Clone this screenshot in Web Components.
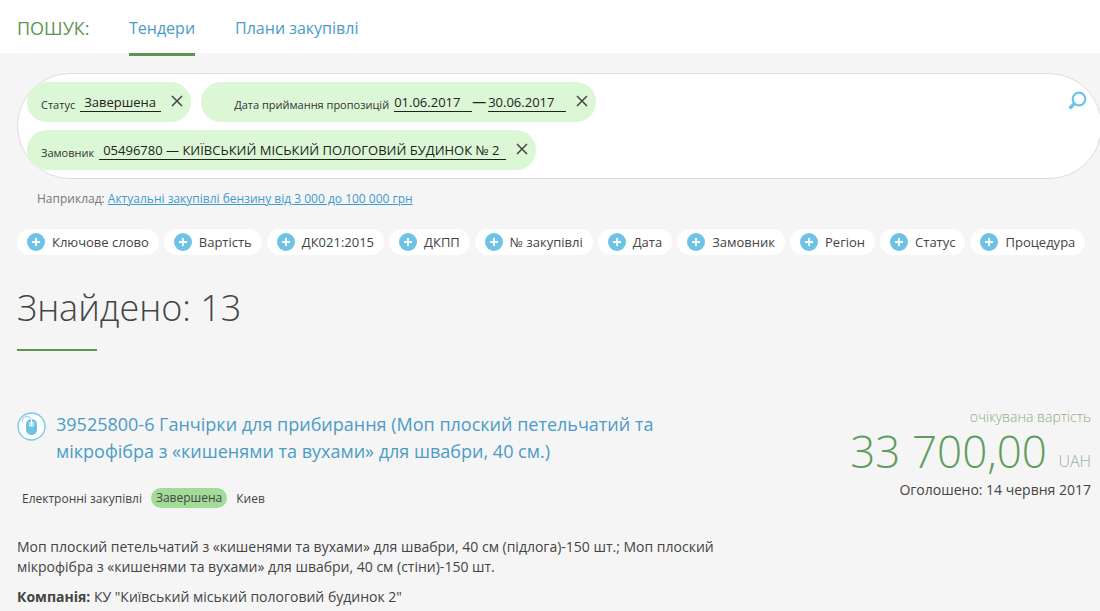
<!DOCTYPE html>
<html lang="uk">
<head>
<meta charset="utf-8">
<title>Пошук</title>
<style>
  html, body { margin: 0; height: 611px; overflow: hidden; background: #f5f5f5; }
  body { font-family: "Open Sans", "Liberation Sans", sans-serif; color: #444; }
</style>
</head>
<body>
<search-tabs></search-tabs>
<search-box></search-box>
<filter-bar></filter-bar>
<found-title count="13"></found-title>
<tender-item></tender-item>

<script>
class SearchTabs extends HTMLElement {
  constructor() {
    super();
    this.attachShadow({ mode: 'open' });
    this.shadowRoot.innerHTML = `
      <style>
        :host { display: flex; height: 53px; background: #fff; padding-left: 17px; font-size: 16px; }
        .label { color: #5f9453; margin-top: 16px; width: 112px; line-height: 24px; font-size: 18px; }
        a { color: #4a9cc7; text-decoration: none; margin-right: 40px; height: 56px; box-sizing: border-box; padding-top: 16px; line-height: 24px; }
        a.on { border-bottom: 3px solid #5f9453; }
      </style>
      <div class="label">ПОШУК:</div>
      <a class="on">Тендери</a>
      <a>Плани закупівлі</a>`;
  }
}

class FilterChip extends HTMLElement {
  constructor() {
    super();
    this.attachShadow({ mode: 'open' });
    this.shadowRoot.innerHTML = `
      <style>
        :host { display: inline-flex; align-items: center; height: 40px; background: #dcf7d5; border-radius: 20px; padding: 0 8px 0 14px; color: #222; font-size: 13px; }
        ::slotted([slot=name]) { font-size: 11px; margin-top: 5px; margin-right: 5px; color: #333; }
        svg { margin-left: 10px; margin-bottom: 3px; }
      </style>
      <slot name="name"></slot>
      <slot></slot>
      <svg width="12" height="12" viewBox="0 0 12 12"><path d="M1 1l10 10M11 1L1 11" stroke="#444" stroke-width="1.5"/></svg>`;
  }
}

class ChipValue extends HTMLElement {
  constructor() {
    super();
    this.attachShadow({ mode: 'open' });
    this.shadowRoot.innerHTML = `
      <style>
        :host { display: inline-block; box-sizing: border-box; border-bottom: 1px solid #222; line-height: 20px; height: 20px; padding: 0 5px; white-space: nowrap; margin-top: -1px; }
      </style>
      <slot></slot>`;
  }
}

class SearchBox extends HTMLElement {
  constructor() {
    super();
    this.attachShadow({ mode: 'open' });
    this.shadowRoot.innerHTML = `
      <style>
        :host { display: block; position: relative; box-sizing: border-box; height: 106px; margin: 20px 0 0 17px; background: #fff; border: 1px solid #ddd; border-radius: 53px; padding: 8px 9px; width: 1085px; }
        .row { display: flex; gap: 10px; height: 48px; }
        svg { position: absolute; left: 1049px; top: 17px; }
        .hint { position: absolute; left: 19px; top: 116px; font-size: 12px; color: #777; white-space: nowrap; }
        .hint a { color: #3f9bcf; text-decoration: underline; }
      </style>
      <div class="row">
        <filter-chip><span slot="name">Статус</span><chip-value style="width:81px;padding-left:4px">Завершена</chip-value></filter-chip>
        <filter-chip style="padding-left:33px"><span slot="name">Дата приймання пропозицій</span><chip-value style="width:78px;padding-left:0">01.06.2017</chip-value><span style="font-size:14px;width:16px;margin-top:-2px">—</span><chip-value style="width:78px;padding-left:0">30.06.2017</chip-value></filter-chip>
      </div>
      <div class="row">
        <filter-chip><span slot="name">Замовник</span><chip-value style="width:407px;padding-left:4px">05496780 — КИЇВСЬКИЙ МІСЬКИЙ ПОЛОГОВИЙ БУДИНОК № 2</chip-value></filter-chip>
      </div>
      <svg width="20" height="20" viewBox="0 0 20 20"><circle cx="12" cy="8" r="6.3" fill="none" stroke="#6cc3e6" stroke-width="2.2"/><path d="M7.5 12.5L2.5 17.5" stroke="#6cc3e6" stroke-width="3.2"/></svg>
      <div class="hint">Наприклад: <a>Актуальні закупівлі бензину від 3 000 до 100 000 грн</a></div>`;
  }
}

class AddFilter extends HTMLElement {
  constructor() {
    super();
    this.attachShadow({ mode: 'open' });
    this.shadowRoot.innerHTML = `
      <style>
        :host { display: inline-flex; align-items: center; height: 26px; background: #fff; border-radius: 13px; padding: 0 10px; font-size: 13px; color: #444; white-space: nowrap; gap: 7px; }
        .plus { flex: none; }
      </style>
      <svg class="plus" width="18" height="18" viewBox="0 0 18 18"><circle cx="9" cy="9" r="9" fill="#6cc3e6"/><path d="M9 5v8M5 9h8" stroke="#fff" stroke-width="2"/></svg>
      <slot></slot>`;
  }
}

class FilterBar extends HTMLElement {
  constructor() {
    super();
    this.attachShadow({ mode: 'open' });
    const names = ['Ключове слово', 'Вартість', 'ДК021:2015', 'ДКПП', '№ закупівлі', 'Дата', 'Замовник', 'Регіон', 'Статус', 'Процедура'];
    this.shadowRoot.innerHTML = `
      <style>
        :host { display: flex; gap: 5px; margin: 50px 0 0 17px; }
      </style>
      ${names.map(n => `<add-filter>${n}</add-filter>`).join('')}`;
  }
}

class FoundTitle extends HTMLElement {
  constructor() {
    super();
    this.attachShadow({ mode: 'open' });
    this.shadowRoot.innerHTML = `
      <style>
        :host { display: block; margin: 0 0 0 17px; }
        h1 { margin: 30px 0 0; font-size: 36px; font-weight: 300; line-height: 46px; color: #444; }
        hr { width: 80px; height: 2px; margin: 18px 0 0; border: 0; background: #5f9453; }
      </style>
      <h1>Знайдено: ${this.getAttribute('count')}</h1>
      <hr>`;
  }
}

class TenderItem extends HTMLElement {
  constructor() {
    super();
    this.attachShadow({ mode: 'open' });
    this.shadowRoot.innerHTML = `
      <style>
        :host { display: block; position: relative; margin: 0 9px 0 17px; padding-top: 60px; }
        .top { display: flex; justify-content: space-between; }
        .title { display: flex; gap: 10px; width: 680px; }
        .title svg { flex: none; margin-top: 1px; }
        h2 { margin: 0; font-size: 18px; font-weight: 400; line-height: 27px; color: #4a9cc7; }
        .price { position: absolute; right: 0; top: 56px; text-align: right; }
        .exp { font-size: 14px; color: #8aaf80; line-height: 20px; font-weight: 300; }
        .sum { font-size: 44px; font-weight: 300; color: #5f9d5f; line-height: 48px; white-space: nowrap; }
        .sum small { font-size: 16px; color: #9ab0a0; vertical-align: 1px; }
        .date { font-size: 14px; color: #444; line-height: 20px; margin-top: -5px; }
        .meta { display: flex; align-items: center; gap: 9px; font-size: 12px; margin: 23px 0 0 5px; color: #444; }
        .st { background: #a3dc98; border-radius: 10px; padding: 2px 5px; line-height: 16px; }
        p { margin: 0; font-size: 14px; line-height: 20px; color: #444; }
        .desc { margin-top: 29px; width: 720px; }
        .co { margin-top: 10px; }
      </style>
      <div class="top">
        <div class="title">
          <svg width="29" height="29" viewBox="0 0 29 29">
            <circle cx="14.5" cy="14.5" r="13.5" fill="#fff" stroke="#7cc9ea" stroke-width="1.4"/>
            <path d="M5 10C6 4 11 2 14.5 7" fill="none" stroke="#7cc9ea" stroke-width="1"/>
            <rect x="9" y="7" width="11" height="16" rx="5.5" fill="#6cc3e6"/>
            <path d="M14.5 7v7M12.8 10.5h3.4v3.5h-3.4z" fill="none" stroke="#fff" stroke-width="1"/>
          </svg>
          <h2>39525800-6 Ганчірки для прибирання (Моп плоский петельчатий та мікрофібра з «кишенями та вухами» для швабри, 40 см.)</h2>
        </div>
        <div class="price">
          <div class="exp">очікувана вартість</div>
          <div class="sum">33 700,00 <small>UAH</small></div>
          <div class="date">Оголошено: 14 червня 2017</div>
        </div>
      </div>
      <div class="meta"><span>Електронні закупівлі</span><span class="st">Завершена</span><span>Киев</span></div>
      <p class="desc">Моп плоский петельчатий з «кишенями та вухами» для швабри, 40 см (підлога)-150 шт.; Моп плоский мікрофібра з «кишенями та вухами» для швабри, 40 см (стіни)-150 шт.</p>
      <p class="co"><b>Компанія:</b> КУ "Київський міський пологовий будинок 2"</p>`;
  }
}

customElements.define('search-tabs', SearchTabs);
customElements.define('filter-chip', FilterChip);
customElements.define('chip-value', ChipValue);
customElements.define('search-box', SearchBox);
customElements.define('add-filter', AddFilter);
customElements.define('filter-bar', FilterBar);
customElements.define('found-title', FoundTitle);
customElements.define('tender-item', TenderItem);
</script>
</body>
</html>
